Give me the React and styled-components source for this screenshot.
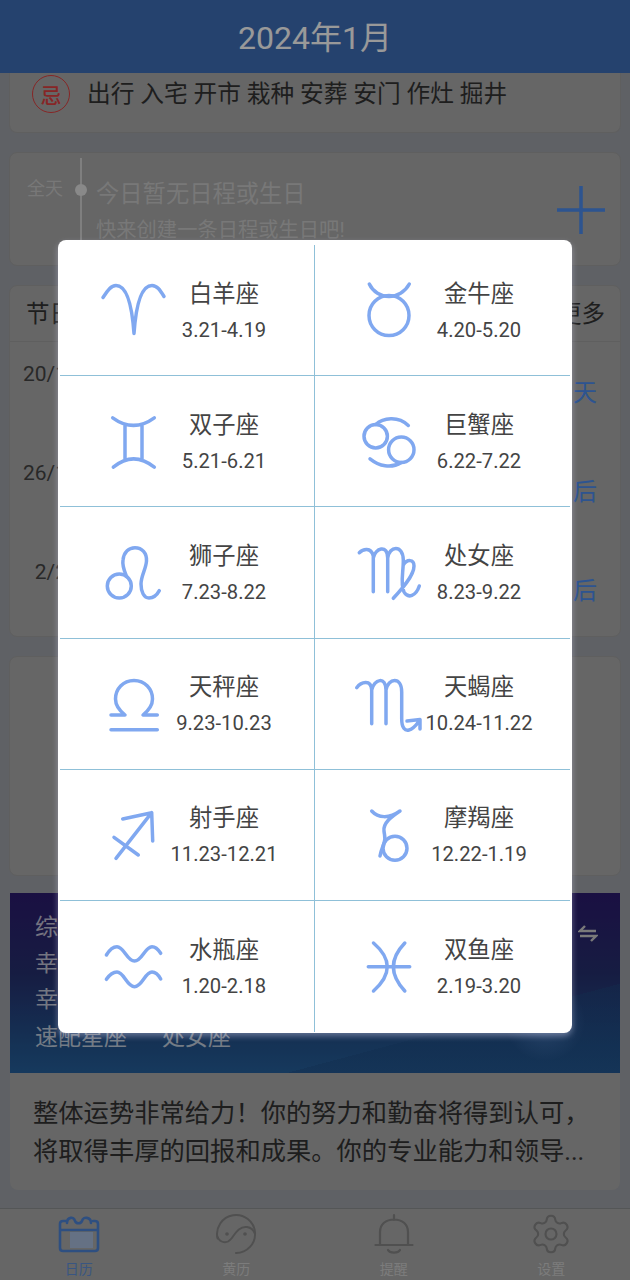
import React from "react";
import styled, { createGlobalStyle } from "styled-components";
import { Settings } from "lucide-react";

const Global = createGlobalStyle`
  html, body { margin: 0; padding: 0; background: #9ea2a8; }
  #root { width: 630px; height: 1280px; overflow: hidden; }
  * { box-sizing: border-box; }
`;
const FONT = `Roboto, "Noto Sans CJK SC", sans-serif`;

const Page = styled.div`
  position: relative; width: 630px; height: 1280px; display: flex; flex-direction: column;
  background: #9ea2a8; font-family: ${FONT}; overflow: hidden;
`;
const Header = styled.header`
  flex: none; height: 73px; background: #3f6eb7; color: #fff; font-size: 32px;
  display: flex; align-items: center; justify-content: center; padding-bottom: 4px;
`;
const Content = styled.main`
  flex: 1; min-height: 0; padding: 0 9px; display: flex; flex-direction: column; gap: 19px;
`;
const Card = styled.section`
  flex: none; height: ${p => p.$h}px; background: #aaa; border: 1px solid #9f9f9f; border-radius: 8px;
  ${p => p.$cut && "border-top: 0; border-radius: 0 0 8px 8px;"}
`;
const AvoidRow = styled(Card)`
  display: flex; align-items: flex-start; padding: 2px 0 0 22px; gap: 17px;
`;
const Stamp = styled.span`
  width: 38px; height: 38px; border-radius: 50%; border: 1.5px solid #e04040; color: #e04040;
  font-size: 21px; font-weight: 500; display: flex; align-items: center; justify-content: center;
`;
const AvoidText = styled.span`
  font-size: 23.7px; line-height: 38px; color: #333;
`;
const ScheduleCard = styled(Card)`
  display: flex; position: relative; padding: 5px 15px 0 17px;
`;
const AllDay = styled.span`
  width: 38px; margin-top: 19px; font-size: 18px; line-height: 24px; color: #c8c8c8;
`;
const Timeline = styled.div`
  position: relative; width: 2px; height: 108px; margin: 0 14px 0 15px; background: #d4d4d4;
  &::after {
    content: ""; position: absolute; left: -5px; top: 26px; width: 12px; height: 12px;
    border-radius: 50%; background: #e4e4e4;
  }
`;
const ScheduleText = styled.div`
  flex: 1; display: flex; flex-direction: column; padding-top: 20px;
`;
const ScheduleTitle = styled.span`
  font-size: 23.3px; line-height: 32px; color: #c8c8c8;
`;
const ScheduleHint = styled.span`
  margin-top: 7px; font-size: 20.3px; line-height: 26px; color: #c8c8c8;
`;
const PlusIcon = styled.svg`
  align-self: center; margin-top: -4px; width: 48px; height: 48px; stroke: #4b8cf0; stroke-width: 3.5; fill: none;
`;
const HolidayHead = styled.div`
  height: 56px; padding: 0 15px 4px 16px; border-bottom: 1px solid #9f9f9f; display: flex;
  align-items: center; justify-content: space-between; font-size: 23.5px; color: #333;
`;
const HolidayRow = styled.div`
  height: 99px; padding: 15px 23px 0 0; display: grid; grid-template-columns: 57px 1fr;
  align-items: start;
`;
const HolidayDate = styled.span`
  font-size: 21px; line-height: 30px; color: #444; text-align: right; padding-top: 2px;
`;
const HolidayLeft = styled.span`
  font-size: 24px; line-height: 32px; margin-top: 20px; color: #4b8cf0; text-align: right;
`;
const Fortune = styled.section`
  flex: none; margin: -2px 1px 0; height: 297px; border-radius: 0 0 8px 8px; background: #aaa; overflow: hidden;
`;
const Banner = styled.div`
  position: relative; height: 180px; padding: 17px 25px 0; color: rgba(255,255,255,.72);
  background:
    radial-gradient(circle at 535px 128px, rgba(120,170,240,.4), transparent 40px),
    linear-gradient(165deg, transparent 74%, rgba(30,75,130,.4) 74%),
    linear-gradient(180deg, #2c1b6e 0%, #26306f 45%, #23558f 85%, #26609c 100%);
`;
const BannerLine = styled.div`
  display: flex; gap: 35px; font-size: 23px; line-height: 36px;
  &:last-of-type { margin-top: 2px; }
`;
const Swap = styled.svg`
  position: absolute; right: 22px; top: 30px; width: 20px; height: 20px; stroke: #ccc; stroke-width: 2.4; fill: none;
`;
const Summary = styled.p`
  margin: 0; padding: 22px 0 0 23px; width: 600px; font-size: 25.3px; line-height: 38px; color: #333;
`;
const TabBar = styled.nav`
  flex: none; height: 72px; margin-top: auto; display: grid; grid-template-columns: repeat(4, 1fr);
  background: #aaa; border-top: 1px solid #8d8f92;
`;
const Tab = styled.div`
  display: flex; flex-direction: column; align-items: center; color: ${p => p.$on ? "#5f8fd8" : "#cfcfcf"};
  font-size: 14px; line-height: 20px;
`;
const TabIcon = styled.div`
  height: 50px; display: flex; align-items: center; justify-content: center; color: ${p => p.$on ? "#4d84d8" : "#858585"};
  svg { display: block; }
`;
const Scrim = styled.div`
  position: absolute; inset: 0; background: rgba(0,0,0,.4); padding-top: 240px;
  display: flex; justify-content: center; align-items: flex-start;
`;
const Modal = styled.div`
  width: 514px; height: 793px; padding: 5px 2px 1px; background: #fff; border-radius: 8px;
  box-shadow: 0 3px 6px rgba(225,225,255,.4);
  display: grid; grid-template-columns: 1fr 1fr; grid-template-rows: repeat(6, 1fr);
`;
const Cell = styled.div`
  display: grid; grid-template-columns: 74px 108px; align-items: center; padding-left: 36px; min-height: 0;
  border-right: ${p => p.$right ? "0" : "1px solid #8fc0d8"};
  border-bottom: ${p => p.$last ? "0" : "1px solid #8fc0d8"};
`;
const Glyph = styled.svg`
  width: 74px; height: 80px; fill: none; stroke: #80a8f0; stroke-width: 3.5; stroke-linecap: round; stroke-linejoin: round;
`;
const SignText = styled.div`
  padding-top: 4px; text-align: center; white-space: nowrap; color: #444;
`;
const SignName = styled.div`
  font-size: 23.3px; line-height: 36px;
`;
const SignDate = styled.div`
  font-size: 20.2px; line-height: 37px;
`;

const wave = "C14 23 18 20.7 21 20.7 C28 20.7 31 35 38.5 35 C46 35 49 20.7 56 20.7 C59 20.7 62 23 64.7 27.3";
const SIGNS = [
  ["白羊座", "3.21-4.19", <path d="M7 27.5 C12 20 15 15.5 20 15.5 C31 15.5 36 35 38 63.5 C40 35 45 15.5 56 15.5 C61 15.5 64 20 68 26.5" />],
  ["金牛座", "4.20-5.20", <><circle cx="38" cy="45.5" r="20" /><path d="M18.3 14 C22 22 30 26.5 38 26.5 C46 26.5 54 22 58.3 14" /></>],
  ["双子座", "5.21-6.21", <path d="M16.7 16.8 Q37.5 32 58.3 16.8 M17.3 66.2 Q37.5 49.5 58.3 66.2 M29 24V58 M46 24V58" />],
  ["巨蟹座", "6.22-7.22", <><circle cx="24.7" cy="35.2" r="11.7" /><circle cx="50.3" cy="48.8" r="12.7" /><path d="M24.7 23.5 C32 17 47 14.5 57.3 24.5 M19 57.8 C28 65 40 68 50.3 61.5" /></>],
  ["狮子座", "7.23-8.22", <><circle cx="23.3" cy="54" r="12" /><path d="M30.7 44.7 C28 38 26 34 27 28 C28 20 33 15.7 39 15.7 C46 15.7 51 21 50.5 29 C50 37 45 44 45 52 C45 60 48 66 53 66 C58 66 61 63 63.3 58.7" /></>],
  ["处女座", "8.23-9.22", <path d="M8.3 20.7 C12 17 20 15 22.3 24 V59.7 M22.3 26 C24 16 36.7 12 36.7 26 V59.7 M36.7 26 C38 14 52 12 52.3 28 C52.5 40 49 52 53 60 C57 67 65 64 68.3 54 M52.3 33 C56 27 63 27 63 34 C63 44 50 58 42.3 66.3" />],
  ["天秤座", "9.23-10.23", <path d="M15 51 H29 C24 47 19.5 42 19.5 35 C19.5 25 27 16.5 38 16.5 C49 16.5 56.5 25 56.5 35 C56.5 42 52 47 47 51 H61.3 M15 65.7 H61.3" />],
  ["天蝎座", "10.24-11.22", <path d="M5.7 23.7 C10 18 20 15 20.7 26 V59.7 M20.7 26 C23 15 35 12 35 26 V59.7 M35 26 C37 14 50.7 12 50.7 28 V55 C50.7 64 54 67 58 66 C63 65 66 60 69 56 M56 57 L69 55.5 V65" />],
  ["射手座", "11.23-12.21", <path d="M20 63.3 L55.7 17.7 M26.7 24 L55.7 17.7 L56.7 46 M18 42.3 L42.3 60" />],
  ["摩羯座", "12.22-1.19", <><circle cx="44" cy="53.3" r="12" /><path d="M20.7 16 C27 23 38 24 49 16 C40 22 32 28 33 36 C33.5 41 35 44 33 48 C32 52 30 55 29 61" /></>],
  ["水瓶座", "1.20-2.18", <path d={`M10.4 29 ${wave} M10.4 53.3 C14 48 18 46 21 46 C28 46 31 60.7 38.5 60.7 C46 60.7 49 46 56 46 C59 46 62 48 64.7 53`} />],
  ["双鱼座", "2.19-3.20", <path d="M22.5 17 Q50 40.7 22.5 65 M53.8 17 Q31 40.7 53.8 65 M17.3 40.7 H58.7" />],
];

const CalendarIcon = () => (
  <svg width="42" height="40" viewBox="0 0 42 40" fill="none" stroke="currentColor" strokeWidth="2.6" strokeLinecap="round" strokeLinejoin="round">
    <rect x="12" y="18" width="23" height="16" fill="#a9bddd" stroke="none" />
    <path d="M9 7 H5 Q2 7 2 10 V34 Q2 37 5 37 H37 Q40 37 40 34 V10 Q40 7 37 7 H35 M2 16 H40" />
    <path d="M9 9 C9 3 16 2 17 7 C18 10 23 10 24 7 C25 2 33 3 33 9" />
  </svg>
);
const TaijiIcon = () => (
  <svg width="42" height="42" viewBox="0 0 42 42" fill="none" stroke="currentColor" strokeWidth="2" strokeLinecap="round">
    <path d="M21 40 A19 19 0 1 0 2.6 25.5" />
    <path d="M2.6 24 C5 30 12 31 16 26 C20 21 24 13 32 14 C36 14.5 39 18 40 21" />
    <circle cx="12" cy="21" r="1.8" fill="currentColor" stroke="none" />
    <circle cx="30" cy="21" r="1.8" fill="currentColor" stroke="none" />
  </svg>
);
const BellIcon = () => (
  <svg width="42" height="42" viewBox="0 0 42 42" fill="none" stroke="currentColor" strokeWidth="2.2" strokeLinecap="round">
    <path d="M21 2 V7 M7 31 V19 C7 11 13 6.5 21 6.5 C29 6.5 35 11 35 19 V31 M2.5 32 H39.5 M15 37 C17 40.5 25 40.5 27 37" />
  </svg>
);

export default function App() {
  return (
    <Page>
      <Global />
      <Header>2024年1月</Header>
      <Content>
        <AvoidRow $h={60} $cut>
          <Stamp>忌</Stamp>
          <AvoidText>出行 入宅 开市 栽种 安葬 安门 作灶 掘井</AvoidText>
        </AvoidRow>
        <ScheduleCard $h={114}>
          <AllDay>全天</AllDay>
          <Timeline />
          <ScheduleText>
            <ScheduleTitle>今日暂无日程或生日</ScheduleTitle>
            <ScheduleHint>快来创建一条日程或生日吧!</ScheduleHint>
          </ScheduleText>
          <PlusIcon viewBox="0 0 48 48"><path d="M24 0 V48 M0 24 H48" /></PlusIcon>
        </ScheduleCard>
        <Card $h={352}>
          <HolidayHead><span>节日</span><span>更多</span></HolidayHead>
          <HolidayRow><HolidayDate>20/1</HolidayDate><HolidayLeft>天</HolidayLeft></HolidayRow>
          <HolidayRow><HolidayDate>26/1</HolidayDate><HolidayLeft>后</HolidayLeft></HolidayRow>
          <HolidayRow><HolidayDate>2/2</HolidayDate><HolidayLeft>后</HolidayLeft></HolidayRow>
        </Card>
        <Card $h={220} />
        <Fortune>
          <Banner>
            <BannerLine>综合</BannerLine>
            <BannerLine>幸运</BannerLine>
            <BannerLine>幸运</BannerLine>
            <BannerLine><span>速配星座</span><span>处女座</span></BannerLine>
            <Swap viewBox="0 0 20 20"><path d="M7 3 L2 8 H18 M2 13 H18 L13 18" /></Swap>
          </Banner>
          <Summary>整体运势非常给力！你的努力和勤奋将得到认可，<br />将取得丰厚的回报和成果。你的专业能力和领导...</Summary>
        </Fortune>
      </Content>
      <TabBar>
        <Tab $on><TabIcon $on><CalendarIcon /></TabIcon>日历</Tab>
        <Tab><TabIcon><TaijiIcon /></TabIcon>黄历</Tab>
        <Tab><TabIcon><BellIcon /></TabIcon>提醒</Tab>
        <Tab><TabIcon><Settings size={44} strokeWidth={1.15} /></TabIcon>设置</Tab>
      </TabBar>
      <Scrim>
        <Modal>
          {SIGNS.map(([name, date, glyph], i) => (
            <Cell key={name} $right={i % 2 === 1} $last={i >= 10}>
              <Glyph viewBox="0 0 74 80">{glyph}</Glyph>
              <SignText>
                <SignName>{name}</SignName>
                <SignDate>{date}</SignDate>
              </SignText>
            </Cell>
          ))}
        </Modal>
      </Scrim>
    </Page>
  );
}
